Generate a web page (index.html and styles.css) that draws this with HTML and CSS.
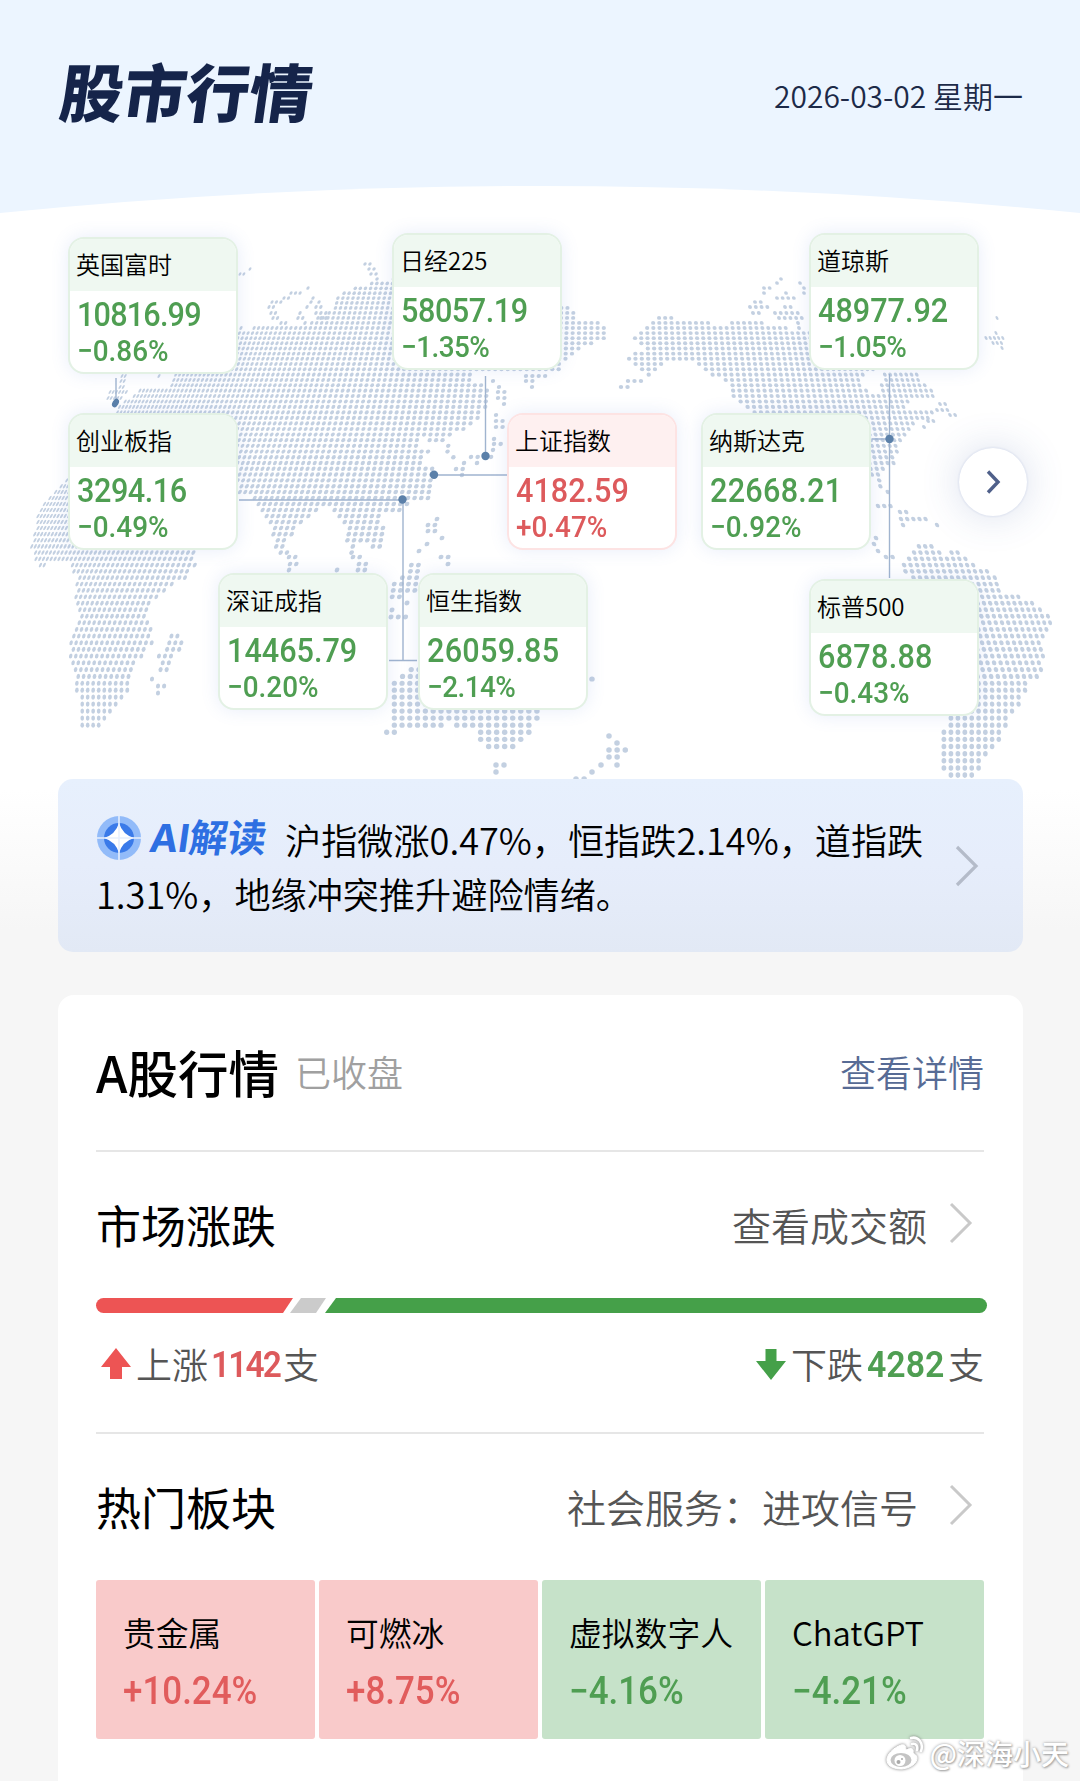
FILE: index.html
```html
<!DOCTYPE html>
<html lang="zh-CN">
<head>
    <meta charset="UTF-8">
    <meta name="viewport" content="width=device-width, initial-scale=1.0">
    <title>股市行情</title>
    <link rel="stylesheet" href="styles.css">
</head>
<body>
    <header class="header">
        <h1 class="title">股市行情</h1>
        <div class="date">2026-03-02 星期一</div>
        <svg class="header-curve" viewBox="0 0 1080 28" preserveAspectRatio="none"><path d="M0 28Q540 -26 1080 28Z" fill="#fff"/></svg>
    </header>

    <section class="map">
        <canvas id="world" class="world" width="1080" height="566"></canvas>
        <svg class="links" width="1080" height="566" viewBox="0 213 1080 566">
            <g stroke="#a0b4cf" stroke-width="1.4" fill="none">
                <path d="M116 378V403M485.5 376V456M434 475H507M239 500H403V660M389 660.5H417M889.5 374V578M872 439H889"/>
            </g>
            <g fill="#5b80a9">
                <ellipse cx="115.5" cy="403" rx="3" ry="4.6" transform="rotate(30 115.5 403)"/>
                <circle cx="485.5" cy="456" r="4.2"/>
                <circle cx="434" cy="474.700" r="4.2"/>
                <circle cx="402.500" cy="499.500" r="4.2"/>
                <circle cx="889.5" cy="439" r="4.2"/>
            </g>
        </svg>
        <div class="pin pin-ftse down"><h3>英国富时</h3><b>10816.99</b><i>−0.86%</i></div>
        <div class="pin pin-nikkei down"><h3>日经225</h3><b>58057.19</b><i>−1.35%</i></div>
        <div class="pin pin-dow down"><h3>道琼斯</h3><b>48977.92</b><i>−1.05%</i></div>
        <div class="pin pin-chinext down"><h3>创业板指</h3><b>3294.16</b><i>−0.49%</i></div>
        <div class="pin pin-sse up"><h3>上证指数</h3><b>4182.59</b><i>+0.47%</i></div>
        <div class="pin pin-nasdaq down"><h3>纳斯达克</h3><b>22668.21</b><i>−0.92%</i></div>
        <div class="pin pin-szse down"><h3>深证成指</h3><b>14465.79</b><i>−0.20%</i></div>
        <div class="pin pin-hsi down"><h3>恒生指数</h3><b>26059.85</b><i>−2.14%</i></div>
        <div class="pin pin-spx down"><h3>标普500</h3><b>6878.88</b><i>−0.43%</i></div>
        <button class="next" aria-label="下一页">
            <svg width="16" height="26" viewBox="0 0 16 26"><path d="M3 2.500L13 13L3 23.500" fill="none" stroke="#4f608a" stroke-width="3.4"/></svg>
        </button>
    </section>

    <section class="ai">
        <p class="ai-text">
            <span class="ai-tag">
                <svg width="44" height="44" viewBox="0 0 44 44">
                    <circle cx="22" cy="22" r="22" fill="#92bbf9"/>
                    <circle cx="22" cy="22" r="15" fill="#3a7ae9"/>
                    <path d="M22 7Q25.500 18.500 37 22Q25.500 25.500 22 37Q18.500 25.500 7 22Q18.500 18.500 22 7Z" fill="#fff"/>
                    <path d="M22 0V44M0 22H44" stroke="#e7effd" stroke-width="1.6"/>
                </svg>
                <em>AI解读</em>
            </span>沪指微涨0.47%，恒指跌2.14%，道指跌1.31%，地缘冲突推升避险情绪。
        </p>
        <svg class="chevron" width="24" height="42" viewBox="0 0 24 42"><path d="M2 2L21 21L2 40" fill="none" stroke="#b4bbc9" stroke-width="3.2"/></svg>
    </section>

    <section class="card">
        <div class="card-head">
            <h2>A股行情</h2>
            <span class="state">已收盘</span>
            <a class="detail">查看详情</a>
        </div>

        <div class="block">
            <div class="row">
                <h4>市场涨跌</h4>
                <span class="more">查看成交额</span>
                <svg class="chevron" width="24" height="42" viewBox="0 0 24 42"><path d="M2 2L21 21L2 40" fill="none" stroke="#c9c9c9" stroke-width="3"/></svg>
            </div>
            <svg class="ratio" width="891" height="15" viewBox="0 0 891 15">
                <path d="M7.500 0H197L187 15H7.500A7.500 7.500 0 0 1 7.500 0Z" fill="#ed5454"/>
                <path d="M205 0H230L220 15H194Z" fill="#cbcbcb"/>
                <path d="M240 0H883.500A7.500 7.500 0 0 1 883.500 15H229Z" fill="#45a049"/>
            </svg>
            <div class="counts">
                <div class="count up">
                    <svg width="30" height="32" viewBox="0 0 30 32"><path d="M15 0L30 19H21V31H9V19H0Z" fill="#ed5454"/></svg>
                    <span>上涨</span><b>1142</b><span>支</span>
                </div>
                <div class="count down">
                    <svg width="30" height="32" viewBox="0 0 30 32"><path d="M15 32L30 13H20.500V1H9.500V13H0Z" fill="#45a049"/></svg>
                    <span>下跌</span><b>4282</b><span>支</span>
                </div>
            </div>
        </div>

        <div class="block">
            <div class="row">
                <h4>热门板块</h4>
                <span class="more wide">社会服务：进攻信号</span>
                <svg class="chevron" width="24" height="42" viewBox="0 0 24 42"><path d="M2 2L21 21L2 40" fill="none" stroke="#c9c9c9" stroke-width="3"/></svg>
            </div>
            <div class="tiles">
                <div class="tile up"><span>贵金属</span><b>+10.24%</b></div>
                <div class="tile up"><span>可燃冰</span><b>+8.75%</b></div>
                <div class="tile down"><span>虚拟数字人</span><b>−4.16%</b></div>
                <div class="tile down"><span>ChatGPT</span><b>−4.21%</b></div>
            </div>
        </div>
    </section>

    <div class="watermark">
        <svg width="42" height="36" viewBox="0 0 42 36" fill="none" stroke="#fff">
            <path d="M17 10C9 13 2 20 3 26C4 32 11 34 18 34C27 33 33 28 33 23C33 20 30 19 29 18C30 14 28 12 22 15C22 11 21 9 17 10Z" fill="#fff"/>
            <ellipse cx="17" cy="25" rx="10.500" ry="7" fill="#c4c4c4" stroke="none"/>
            <circle cx="16" cy="25.500" r="5.500" fill="#fff" stroke="none"/>
            <circle cx="14.500" cy="27" r="2" fill="#aaa" stroke="none"/>
            <circle cx="18" cy="24" r="1" fill="#aaa" stroke="none"/>
            <path d="M27 3C34 1 40 8 37 16M28 9C32 8 34 11 33 15" stroke-width="2.6" stroke-linecap="round"/>
        </svg>
        <span>@深海小天</span>
    </div>

    <script src="map.js"></script>
</body>
</html>
```
FILE: styles.css
```css
* {
    box-sizing: border-box;
    margin: 0;
    padding: 0;
}
body {
    width: 1080px;
    height: 1781px;
    overflow: hidden;
    position: relative;
    font-family: "Noto Sans CJK SC", sans-serif;
    color: #000;
    background: linear-gradient(#fff 790px, #f6f6f6 930px);
}
.header {
    position: relative;
    height: 213px;
    padding: 0 57px 0 58px;
    display: flex;
    justify-content: space-between;
    background-color: #ecf5ff;
}
.title {
    margin-top: 43px;
    margin-left: -2px;
    font-size: 63px;
    line-height: 94px;
    font-weight: 900;
    color: #15244a;
    transform: skewX(-8deg);
}
.date {
    margin-top: 73px;
    font-size: 30px;
    line-height: 44px;
    font-weight: 350;
    color: #1c2a48;
}
.header-curve {
    position: absolute;
    left: 0;
    bottom: 0;
    width: 100%;
    height: 28px;
}

/* world map */
.map {
    position: relative;
    height: 566px;
}
.world,
.links {
    position: absolute;
    left: 0;
    top: 0;
}
.pin {
    position: absolute;
    width: 170px;
    height: 137px;
    border: 2px solid #e3f1e4;
    border-radius: 16px;
    background: #fff;
    overflow: hidden;
    box-shadow: 0 0 18px rgba(90, 130, 220, 0.14);
}
.pin h3 {
    height: 52px;
    padding-left: 6px;
    font-size: 24px;
    line-height: 50px;
    font-weight: 350;
    background: #eff8f1;
}
.pin b,
.pin i {
    display: block;
    padding-left: 7px;
    font-family: Roboto, sans-serif;
    font-style: normal;
    font-weight: 500;
    transform-origin: 7px 0;
    white-space: nowrap;
}
.pin b {
    margin-top: 3px;
    font-size: 34px;
    line-height: 40px;
    transform: scaleX(0.9);
}
.pin i {
    font-size: 30px;
    line-height: 34px;
    transform: scaleX(0.93);
}
.pin.up {
    border-color: #fde3e3;
}
.pin.up h3 {
    background: #fef0f0;
}
.up b,
.up i {
    color: #dd5a5c;
}
.down b,
.down i {
    color: #4f9e52;
}
.pin-ftse { left: 68px; top: 24px; }
.pin-nikkei { left: 392px; top: 20px; }
.pin-dow { left: 809px; top: 20px; }
.pin-chinext { left: 68px; top: 200px; }
.pin-sse { left: 507px; top: 200px; }
.pin-nasdaq { left: 701px; top: 200px; }
.pin-szse { left: 218px; top: 360px; }
.pin-hsi { left: 418px; top: 360px; }
.pin-spx { left: 809px; top: 366px; }
.pin-ftse b { letter-spacing: -0.9px; }
.pin-nikkei b,
.pin-chinext b { letter-spacing: -0.5px; }
.pin-nasdaq b,
.pin-spx b,
.pin-hsi b { letter-spacing: 0.3px; }
.pin-nikkei i,
.pin-dow i,
.pin-hsi i { letter-spacing: -0.6px; }
.next {
    position: absolute;
    left: 959px;
    top: 235px;
    width: 68px;
    height: 68px;
    display: flex;
    align-items: center;
    justify-content: center;
    border: none;
    border-radius: 50%;
    background: #fff;
    box-shadow: 0 0 40px rgba(60, 90, 160, 0.2), 0 0 3px rgba(60, 90, 160, 0.2);
}

/* AI summary */
.ai {
    display: flex;
    align-items: center;
    height: 173px;
    margin: 0 57px 0 58px;
    padding-left: 38px;
    border-radius: 15px;
    background: linear-gradient(#e7f0fd, #e6edfb 50%, #e2e9f5);
}
.ai-text {
    width: 850px;
    font-size: 36.15px;
    line-height: 54px;
    font-weight: 350;
}
.ai-tag {
    display: inline-flex;
    align-items: center;
    width: 189px;
    height: 44px;
    margin-top: -4px;
    padding-left: 1px;
    vertical-align: -5px;
}
.ai-tag em {
    margin-left: 9px;
    font-family: Inter, "Noto Sans CJK SC", sans-serif;
    font-style: normal;
    font-weight: 700;
    font-size: 38.5px;
    line-height: 44px;
    color: #2e6fe2;
    transform: skewX(-8deg);
}
.chevron {
    flex: none;
}
.ai .chevron {
    margin-left: 9px;
}

/* A-share card */
.card {
    height: 820px;
    margin: 43px 57px 0 58px;
    padding: 0 39px 0 38px;
    border-radius: 16px;
    background: #fff;
}
.card-head {
    display: flex;
    align-items: center;
    height: 155px;
    padding-bottom: 3px;
}
.card-head h2 {
    font-size: 50.5px;
    line-height: 72px;
    font-weight: 500;
}
.state {
    margin-left: 16px;
    font-size: 36px;
    font-weight: 350;
    color: #a0a0a0;
}
.detail {
    margin-left: auto;
    font-size: 36px;
    font-weight: 350;
    color: #576b95;
}
.block {
    height: 282px;
    border-top: 2px solid #e6e6e6;
}
.row {
    display: flex;
    align-items: center;
    height: 146px;
    padding: 0 11px 2px 0;
}
.row h4 {
    font-size: 45px;
    font-weight: 400;
}
.more {
    margin-left: auto;
    margin-right: 22px;
    font-size: 39px;
    font-weight: 350;
    color: #555;
}
.more.wide {
    margin-right: 31px;
}
.row .chevron {
    margin-top: -2px;
}
.ratio {
    display: block;
    overflow: visible;
}
.counts {
    display: flex;
    justify-content: space-between;
    height: 104px;
    align-items: center;
    padding-bottom: 4px;
}
.count {
    display: flex;
    align-items: center;
    font-size: 36px;
    line-height: 52px;
    font-weight: 350;
    color: #555;
}
.count svg {
    margin: 2px 5px 0 5px;
}
.count b {
    width: 77px;
    margin: 4px 4px 0;
    font-family: Roboto, sans-serif;
    font-size: 36px;
    font-weight: 600;
    transform: scaleX(0.94);
    transform-origin: 0 0;
}
.count.up b {
    width: 69px;
    margin: 4px 3px 0;
    letter-spacing: -2px;
    transform: scaleX(0.93);
}
.tiles {
    display: grid;
    grid-template-columns: repeat(4, 1fr);
    gap: 4px;
}
.tile {
    display: flex;
    flex-direction: column;
    height: 159px;
    padding: 28px 0 0 27px;
    border-radius: 3px;
    font-size: 32.8px;
    line-height: 48px;
    font-weight: 350;
    white-space: nowrap;
}
.tile.up {
    background: #f9caca;
}
.tile.down {
    background: #c6e2c9;
}
.tile b {
    margin-top: 11px;
    font-family: Roboto, sans-serif;
    font-size: 38px;
    font-weight: 500;
    transform: scaleX(0.92);
    transform-origin: 0 0;
}
.tile.up b {
    color: #e15c5c;
}

.watermark {
    position: absolute;
    right: 11px;
    bottom: 8px;
    display: flex;
    align-items: center;
    font-size: 28px;
    line-height: 40px;
    font-weight: 500;
    color: #fff;
    text-shadow: 0 0 3px #999, 1px 1px 2px #aaa;
}
.watermark svg {
    margin-right: 4px;
    filter: drop-shadow(0 0 1.5px #777);
}
```
FILE: map.js
```js
// Dotted world map. Coordinates are page pixels, the canvas starts at y = 213.
const TOP = 213;
const CENTER = 610;

// outlines of the large land masses
const lands = [
    // Eurasia
    [115,412, 120,404, 134,395, 139,389, 169,386, 174,374, 200,372, 200,345, 236,336, 242,324, 246,330, 257,325,
     299,324, 306,326, 311,320, 321,316, 330,311, 335,299, 347,290, 361,286, 378,281, 389,282, 400,270, 440,275,
     540,300, 563,305, 569,306, 578,318, 587,320, 607,325, 607,340, 588,345, 576,352, 568,356, 560,370, 472,370,
     473,382, 486,386, 489,393, 487,404, 484,412, 477,422, 465,428, 456,434, 448,440, 452,450, 460,459, 448,459,
     443,446, 424,439, 418,445, 433,451, 422,457, 424,463, 438,468, 436,481, 428,494, 432,502, 412,502, 402,509,
     396,515, 382,511, 381,525, 388,530, 386,546, 376,553, 368,546, 361,540, 357,553, 351,553, 346,538, 343,526,
     336,514, 330,504, 322,509, 315,515, 306,521, 297,527, 290,538, 287,553, 277,560, 273,537, 268,524, 259,508,
     257,500, 240,494, 150,494, 120,440],
    // Africa
    [66,478, 41,506, 39,512, 30,546, 37,566, 69,563, 77,577, 73,599, 80,612, 76,631, 69,645, 68,660, 72,672,
     77,695, 80,708, 78,724, 85,731, 104,724, 111,715, 124,700, 132,681, 132,666, 140,658, 153,646, 153,630,
     149,617, 152,604, 166,590, 187,578, 196,564, 198,549, 190,480],
    // Madagascar
    [175,628, 179,630, 184,645, 175,659, 167,674, 157,674, 159,652, 167,643],
    // Borneo
    [399,580, 408,562, 421,562, 420,586, 411,596, 390,600, 390,576],
    // Australia
    [409,670, 394,678, 389,690, 394,718, 385,731, 393,740, 402,732, 422,731, 445,724, 454,724, 462,732, 476,732,
     479,744, 486,753, 508,753, 516,744, 524,737, 532,730, 544,712, 540,680, 430,660],
    // North America
    [655,316, 676,316, 679,321, 708,321, 711,327, 727,327, 729,321, 762,321, 779,327, 810,331, 850,340, 880,372,
     857,376, 864,386, 872,392, 880,392, 881,374, 917,370, 920,380, 928,387, 938,393, 932,400, 905,402, 911,410,
     932,412, 933,418, 918,420, 910,430, 905,440, 899,446, 897,464, 888,466, 882,478, 884,486, 890,495, 886,497,
     878,485, 870,474, 850,440, 748,412, 740,405, 733,399, 729,385, 714,377, 707,371, 700,366, 694,361, 664,361,
     660,367, 650,377, 640,371, 633,366, 627,359, 633,353, 643,352, 644,346, 637,342, 631,338, 638,332, 645,326],
    // South America
    [919,542, 928,542, 936,551, 948,556, 955,548, 965,558, 974,564, 986,568, 995,577, 1002,584, 1000,592,
     1015,590, 1024,597, 1037,603, 1045,610, 1052,617, 1053,626, 1046,631, 1043,640, 1044,666, 1040,673,
     1028,687, 1022,700, 1012,715, 1005,729, 997,743, 984,758, 978,772, 971,781, 950,781, 944,772, 942,727,
     951,721, 944,713, 915,640, 908,580, 901,564, 908,556, 914,549]
];

// small islands: y, from x, to x
const islands = [
    [264,365,370],[269,369,374],[274,371,376],[279,377,377],[269,250,250],[274,240,244],
    [288,308,308],[293,291,303],[298,284,289],[302,272,282],[307,269,275],[313,271,276],[318,273,277],[323,281,288],
    [298,313,313],[302,311,311],[307,307,307],[313,300,300],[318,298,303],[323,305,305],
    [302,319,319],[307,316,321],[313,316,326],[318,321,326],
    [376,122,127],[381,121,126],[387,120,125],[392,110,127],[398,108,123],[376,159,159],
    [376,526,547],[381,526,533],[387,532,532],
    [381,493,493],[387,499,499],[392,498,506],[398,498,506],[404,504,504],[415,496,496],[421,496,504],[427,496,503],
    [439,494,494],[444,494,501],[450,493,493],[457,471,492],[463,477,477],[463,464,464],[469,456,463],[475,462,462],
    [519,437,437],[525,428,437],[531,428,437],[538,442,442],[544,427,427],[551,419,419],[557,441,449],[564,448,448],
    [557,289,298],[564,290,298],[570,289,289],[557,353,361],[564,359,367],[570,358,366],[570,337,337],
    [603,407,407],[610,392,392],[617,391,408],[679,152,152],[686,158,165],[693,158,158],
    [679,592,592],[736,609,609],[743,617,617],[750,609,626],[757,609,617],[765,617,617],[765,601,601],[772,592,592],
    [779,576,585],[765,496,504],[772,496,496],
    [387,621,630],[381,628,643],[279,781,781],[283,777,777],[283,800,800],[288,764,769],[293,764,764],[288,804,804],
    [293,786,786],[293,804,808],[298,777,796],[302,755,761],[307,750,770],[313,753,759],[307,785,793],[313,775,801],
    [318,779,804],[323,798,798],[328,799,799],
    [318,997,997],[333,996,996],[338,986,1005],[343,993,1003],[348,1002,1002],
    [404,940,946],[410,937,950],[415,950,956],[421,928,935],[427,924,924],
    [506,878,893],[512,900,908],[519,901,930],[525,903,903],[525,937,937],[538,876,876],[544,874,878],[551,878,878],
    [557,886,895]
];

// rows get further apart towards the bottom
const rows = [];
for (let y = 264.3, step = 4.7; y < 782; y += step) {
    rows.push(y);
    step = 4.75 + (y - 264) * 0.0051;
    if (step > 7.15) step = 7.15;
}

function pitch(x, y) {
    y = Math.min(y, 680);
    const peak = 6.1 + (y - 310) * 0.0055;
    const flat = y < 506 ? 432000 + (y - 320) * 740 : 570000 + (y - 506) * 1440;
    return Math.max(3, peak * (1 - (x - CENTER) * (x - CENTER) / flat));
}

const ctx = document.getElementById('world').getContext('2d');
ctx.fillStyle = '#c3d0e1';

const shapes = lands.map(function (points) {
    const path = new Path2D();
    for (let i = 0; i < points.length; i += 2) {
        path.lineTo(points[i], points[i + 1]);
    }
    path.closePath();
    return path;
});

function dot(x, y) {
    const rx = pitch(x, y) * 0.34;
    const ry = 1.8 + (y - 264) * 0.0019;
    // dots lean away from the centre, upright in the south
    const lean = Math.min(1, Math.max(0, (720 - y) / 220));
    const slant = (x - CENTER) / 1000 * lean;
    ctx.save();
    ctx.translate(x, y - TOP);
    ctx.transform(1, 0, slant, 1, 0, 0);
    ctx.beginPath();
    ctx.ellipse(0, 0, rx, ry, 0, 0, Math.PI * 2);
    ctx.fill();
    ctx.restore();
}

rows.forEach(function (y) {
    [-1, 1].forEach(function (dir) {
        let x = dir < 0 ? CENTER : CENTER + pitch(CENTER, y);
        while (x > 20 && x < 1060) {
            if (shapes.some(function (s) { return ctx.isPointInPath(s, x, y); })) {
                dot(x, y);
            }
            x += dir * pitch(x, y);
        }
    });
});

islands.forEach(function (row) {
    for (let x = row[1]; x <= row[2] + 1; x += pitch(x, row[0])) {
        dot(x, row[0]);
    }
});
```
